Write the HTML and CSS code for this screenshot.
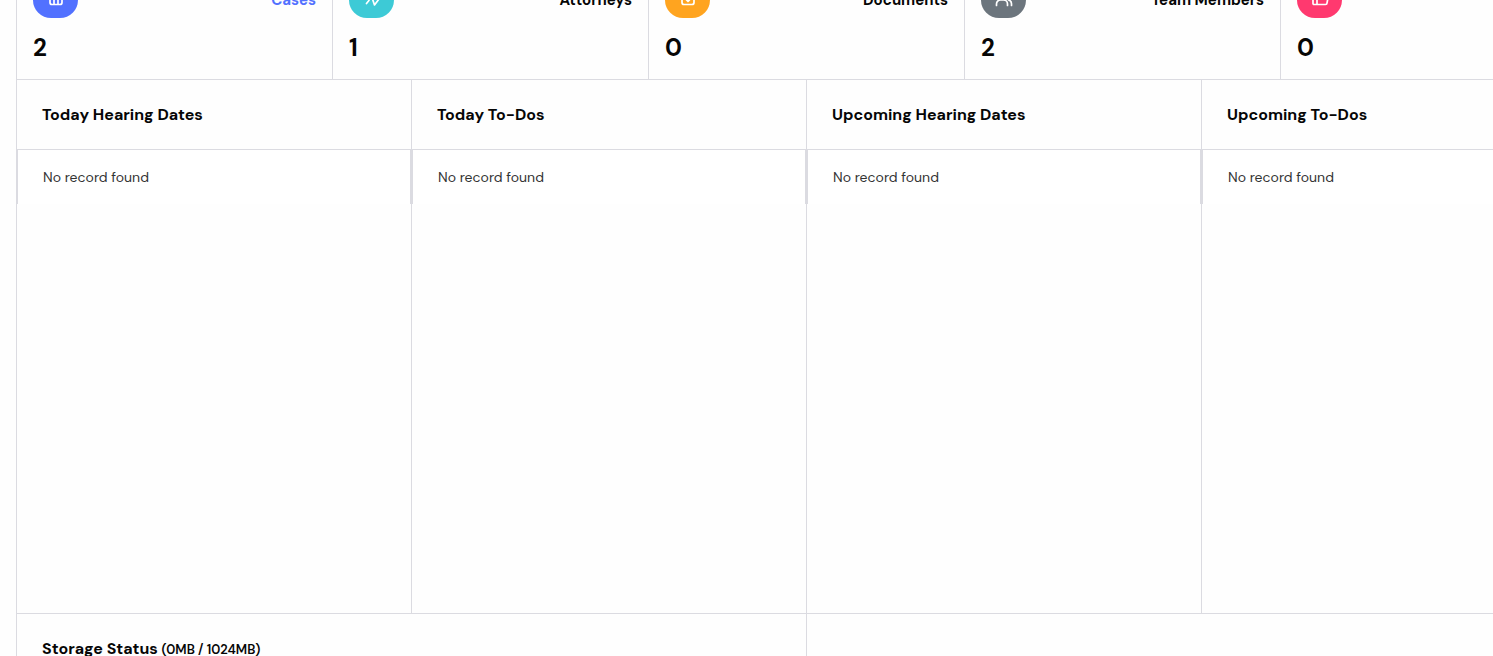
FILE: index.html
```html
<!DOCTYPE html>
<html lang="en">
<head>
<meta charset="utf-8">
<title>Dashboard</title>
<link rel="stylesheet" href="styles.css">
</head>
<body>
<main class="board">
  <section class="stats">
    <article class="stat">
      <div class="stat-top">
        <span class="icon blue"><svg viewBox="0 0 18 18"><rect x="3" y="4" width="12" height="13.500" rx="2"/><path d="M3 9h12M7 9v8M11 9v8"/></svg></span>
        <a class="label active" href="#cases">Cases</a>
      </div>
      <p class="count">2</p>
    </article>
    <article class="stat">
      <div class="stat-top">
        <span class="icon teal"><svg viewBox="0 0 18 18"><path d="M3.500 16.500L5.500 14L8.500 9L11.500 18L16 12"/></svg></span>
        <a class="label" href="#attorneys">Attorneys</a>
      </div>
      <p class="count">1</p>
    </article>
    <article class="stat">
      <div class="stat-top">
        <span class="icon orange"><svg viewBox="0 0 18 18"><rect x="3" y="4" width="12" height="13.500" rx="2"/><path d="M9 7v7M7.500 13L9 14.500l1.500-1.500"/></svg></span>
        <a class="label" href="#documents">Documents</a>
      </div>
      <p class="count">0</p>
    </article>
    <article class="stat">
      <div class="stat-top">
        <span class="icon gray"><svg viewBox="0 0 18 18"><circle cx="7" cy="7" r="3.500"/><path d="M1.500 18.500v-1.500a4 4 0 0 1 4-4h3a4 4 0 0 1 4 4V18.500M12 3.500a3.500 3.500 0 0 1 0 7M13.500 13a4 4 0 0 1 3 4V18.500"/></svg></span>
        <a class="label" href="#team">Team Members</a>
      </div>
      <p class="count">2</p>
    </article>
    <article class="stat">
      <div class="stat-top">
        <span class="icon pink"><svg viewBox="0 0 18 18"><path d="M6 10l3-6.500a2 2 0 0 1 2 2V9h4.500a1.500 1.500 0 0 1 1.500 1.800l-1 5.200a1.500 1.500 0 0 1-1.500 1.500H3a1 1 0 0 1-1-1V11a1 1 0 0 1 1-1zM6 10v7.500"/></svg></span>
        <a class="label" href="#clients">Clients</a>
      </div>
      <p class="count">0</p>
    </article>
  </section>
  <section class="panels">
    <article class="panel"><h2 class="title">Today Hearing Dates</h2><p class="record">No record found</p></article>
    <article class="panel"><h2 class="title">Today To-Dos</h2><p class="record">No record found</p></article>
    <article class="panel"><h2 class="title">Upcoming Hearing Dates</h2><p class="record">No record found</p></article>
    <article class="panel"><h2 class="title">Upcoming To-Dos</h2><p class="record">No record found</p></article>
  </section>
  <section class="storage">
    <article class="storage-cell"><h2 class="storage-title">Storage Status <small class="usage">(0MB / 1024MB)</small></h2></article>
    <article class="storage-cell"></article>
  </section>
</main>
</body>
</html>
```
FILE: styles.css
```css
* { box-sizing: border-box; }

body {
  margin: 0;
  overflow: hidden;
  background: #fefefe;
  color: #060606;
  font-family: "DM Sans", Inter, "Liberation Sans", sans-serif;
  font-size: 14px;
}

h2, p { margin: 0; }

.board {
  min-width: 1581px;
  margin: -44px 0 0 16px;
  border-left: 1px solid #dbdbe1;
}

.stats, .panels, .storage { display: grid; }
.stats { grid-template-columns: repeat(5, 1fr); }
.panels { grid-template-columns: repeat(4, 1fr); }
.storage { grid-template-columns: repeat(2, 1fr); }

.stat, .panel, .storage-cell { border-right: 1px solid #dbdbe1; }
.stat, .panel { border-bottom: 1px solid #dbdbe1; }

.stat { padding: 17px 16px 16px; }

.stat-top {
  display: flex;
  align-items: center;
  justify-content: space-between;
}

.icon {
  display: grid;
  place-items: center;
  width: 45px;
  height: 45px;
  border-radius: 18px;
}

.icon svg {
  width: 18px;
  height: 18px;
  overflow: visible;
  fill: none;
  stroke: #fff;
  stroke-width: 1.7;
  stroke-linecap: round;
  stroke-linejoin: round;
}

.blue { background: #5271ff; }
.teal { background: #3dcad6; }
.orange { background: #ffa41f; }
.gray { background: #6c757d; }
.pink { background: #ff396f; }

.label {
  padding-top: 8px;
  color: inherit;
  font-size: 15px;
  font-weight: 700;
  line-height: 20px;
  text-decoration: none;
}

.active { color: #5271ff; }

.count {
  padding-top: 14px;
  font-size: 24px;
  font-weight: 700;
  line-height: 31px;
}

.panel { min-height: 534px; }

.title {
  padding: 23px 25px 22px;
  border-bottom: 1px solid #dbdbe1;
  font-size: 16px;
  font-weight: 700;
  line-height: 24px;
}

.record {
  padding: 17px 25px;
  border: solid #dbdbe1;
  border-width: 0 1px;
  background: #fff;
  color: #333;
  line-height: 20px;
}

.storage-cell { min-height: 120px; }

.storage-title {
  padding: 23px 25px;
  font-size: 16px;
  font-weight: 700;
  line-height: 24px;
}

.usage {
  font-size: 13px;
  font-weight: 600;
}
```
